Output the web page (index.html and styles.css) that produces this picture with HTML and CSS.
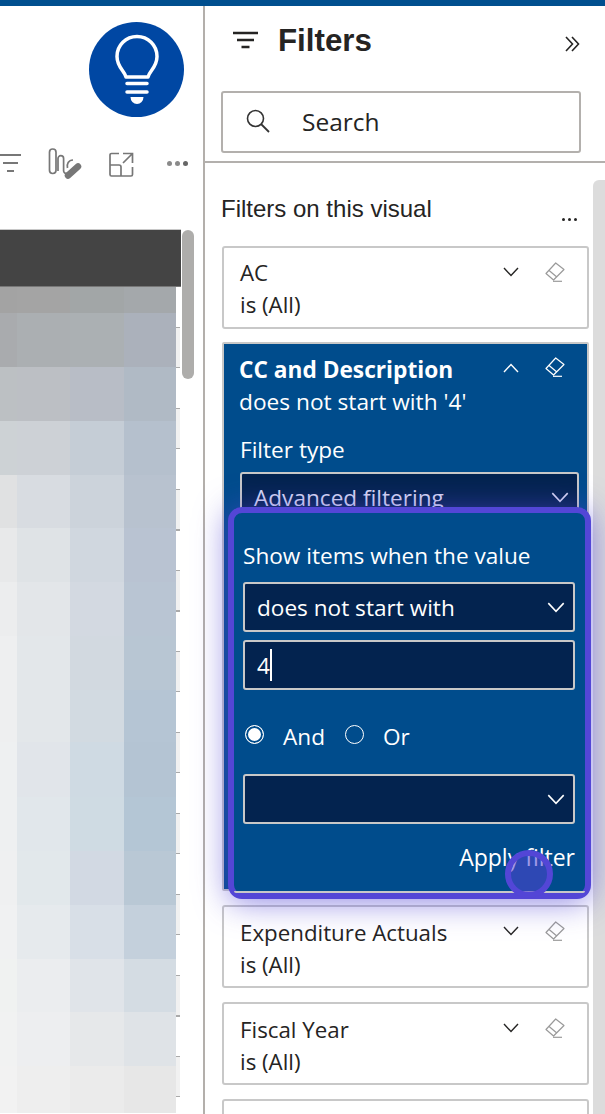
FILE: index.html
```html
<!DOCTYPE html>
<html lang="en">
<head>
<meta charset="utf-8">
<title>Filters</title>
<link rel="stylesheet" href="styles.css">
</head>
<body>
<svg class="defs" width="0" height="0" aria-hidden="true">
  <symbol id="chev" viewBox="0 0 16 10"><path d="M1 1l7 7.500L15 1" fill="none" stroke="currentColor" stroke-width="1.400"/></symbol>
  <symbol id="erase" viewBox="0 0 20 20"><path d="M10.700 1L19 7.500 8.500 18 1 11.500zM3.500 8l8 6.800" fill="none" stroke="currentColor" stroke-width="1.200" stroke-linejoin="round"/><path d="M8 19.300h9" stroke="currentColor" stroke-width="1.200"/></symbol>
</svg>
<div class="topbar"></div>
<div class="app">
  <section class="report">
    <div class="badge-row">
      <div class="badge">
        <svg width="52" height="72" viewBox="0 0 52 72"><path d="M15 43c-1.500-6-9-10-9-20.500a20 20 0 0 1 40 0c0 10.500-7.500 14.500-9 20.500z" fill="none" stroke="#fff" stroke-width="3.500" stroke-linejoin="round"/><path d="M16 49.500h20M16 58h20" stroke="#fff" stroke-width="3.500" stroke-linecap="round"/><path d="M19.500 63h13a6.500 7 0 0 1-13 0z" fill="#fff"/></svg>
      </div>
    </div>
    <div class="visual-tools">
      <svg class="tool-filter" width="21" height="19" viewBox="0 0 21 19"><path d="M0 1h21M3 9h15M7 17h7" stroke="#777" stroke-width="2"/></svg>
      <svg class="tool" width="34" height="32" viewBox="0 0 34 32"><rect x="1.500" y="2" width="6.500" height="24.500" rx="3.200" fill="none" stroke="#777" stroke-width="1.700"/><path d="M10 24V11.500a2.800 2.800 0 0 1 5.600 0V24a2.800 2.800 0 0 0 3.400 2.400" fill="none" stroke="#777" stroke-width="1.700"/><path d="M19.500 21c-1-4 1-8 5.500-8" fill="none" stroke="#777" stroke-width="1.700"/><path d="M20 28.500l10-9" stroke="#777" stroke-width="6.500" stroke-linecap="round"/></svg>
      <svg class="tool tool-expand" width="25" height="25" viewBox="0 0 25 25"><path d="M10 1.500H2.500a1.500 1.500 0 0 0-1.500 1.500v19.500a1.500 1.500 0 0 0 1.500 1.500H22a1.500 1.500 0 0 0 1.500-1.500V15M1 13h9a2 2 0 0 1 2 2v9M14 1.500h9.500V11M23.500 1.500L14 11" fill="none" stroke="#777" stroke-width="1.700"/></svg>
      <div class="tool-dots"><i></i><i></i><i></i></div>
    </div>
    <div class="visual">
      <div class="table">
        <div class="table-head"></div>
        <div class="table-body">
          <div class="heat">
            <div class="heat-row h26"><i style="background:#a3a3a3"></i><i style="background:#a4a4a4"></i><i style="background:#a2a6a7"></i><i style="background:#a4a8ab"></i></div>
            <div class="heat-row"><i style="background:#a9abae"></i><i style="background:#abafb2"></i><i style="background:#abb0b3"></i><i style="background:#abb1bb"></i></div>
            <div class="heat-row"><i style="background:#bcc0c3"></i><i style="background:#bcbfc4"></i><i style="background:#b8bdc6"></i><i style="background:#b0bac5"></i></div>
            <div class="heat-row"><i style="background:#cdd2d5"></i><i style="background:#cdd1d6"></i><i style="background:#c5cdd6"></i><i style="background:#b5c0cd"></i></div>
            <div class="heat-row h53"><i style="background:#e0e1e2"></i><i style="background:#d8dce1"></i><i style="background:#ccd3db"></i><i style="background:#b8c2cf"></i></div>
            <div class="heat-row"><i style="background:#e8e9ea"></i><i style="background:#dfe3e6"></i><i style="background:#d0d7df"></i><i style="background:#b9c3d2"></i></div>
            <div class="heat-row"><i style="background:#ecedee"></i><i style="background:#e3e6e9"></i><i style="background:#d3d9e1"></i><i style="background:#b9c5d3"></i></div>
            <div class="heat-row"><i style="background:#eeeff0"></i><i style="background:#e3e7ea"></i><i style="background:#d2d9e0"></i><i style="background:#b8c6d3"></i></div>
            <div class="heat-row h52"><i style="background:#eeeff0"></i><i style="background:#e3e7ea"></i><i style="background:#d2dae1"></i><i style="background:#b5c5d4"></i></div>
            <div class="heat-row h55"><i style="background:#eef0f1"></i><i style="background:#e1e5ea"></i><i style="background:#cfdae3"></i><i style="background:#b4c4d3"></i></div>
            <div class="heat-row"><i style="background:#eef0f1"></i><i style="background:#e1e7eb"></i><i style="background:#cfdbe3"></i><i style="background:#b4c6d5"></i></div>
            <div class="heat-row"><i style="background:#eff0f1"></i><i style="background:#e2e8eb"></i><i style="background:#d2d9e3"></i><i style="background:#b9c8d5"></i></div>
            <div class="heat-row"><i style="background:#f0f1f2"></i><i style="background:#e6eaed"></i><i style="background:#d8dfe7"></i><i style="background:#c4d0dc"></i></div>
            <div class="heat-row h53"><i style="background:#f0f2f1"></i><i style="background:#ebedef"></i><i style="background:#e0e4e9"></i><i style="background:#d4dce3"></i></div>
            <div class="heat-row"><i style="background:#f1f2f2"></i><i style="background:#edeef0"></i><i style="background:#e6e8ea"></i><i style="background:#dfe3e7"></i></div>
            <div class="heat-row h47"><i style="background:#f2f2f2"></i><i style="background:#eeeeee"></i><i style="background:#ebebeb"></i><i style="background:#e7e7e7"></i></div>
          </div>
          <div class="ticks"></div>
        </div>
      </div>
      <div class="report-scroll"></div>
    </div>
  </section>

  <aside class="pane">
    <header class="pane-head">
      <svg class="pane-icon" width="26" height="18" viewBox="0 0 26 18"><path d="M0 2h25M4 9h17M8.500 16h8" stroke="#252423" stroke-width="2.400"/></svg>
      <h1 class="pane-title">Filters</h1>
      <svg class="pane-collapse" width="15" height="16" viewBox="0 0 15 16"><path d="M1 1l6.500 7L1 15M7 1l6.500 7L7 15" fill="none" stroke="#252423" stroke-width="1.600"/></svg>
    </header>
    <div class="search">
      <svg width="24" height="24" viewBox="0 0 24 24"><circle cx="9.500" cy="9.500" r="8" fill="none" stroke="#333" stroke-width="1.600"/><path d="M15 15l8 8" stroke="#333" stroke-width="1.800"/></svg>
      <span>Search</span>
    </div>
    <div class="pane-rule"></div>
    <div class="pane-body">
      <div class="filters">
        <div class="section-head">
          <span>Filters on this visual</span>
          <span class="section-dots"><i></i><i></i><i></i></span>
        </div>
        <div class="card">
          <div class="card-text"><div>AC</div><div>is (All)</div></div>
          <svg class="chev" width="16" height="10"><use href="#chev"/></svg>
          <svg class="erase" width="20" height="20"><use href="#erase"/></svg>
        </div>
        <div class="card-open">
          <div class="open-head">
            <div class="card-text"><div class="bold">CC and Description</div><div>does not start with '4'</div></div>
            <svg class="chev up" width="16" height="10"><use href="#chev"/></svg>
            <svg class="erase" width="20" height="20"><use href="#erase"/></svg>
          </div>
          <div class="label">Filter type</div>
          <div class="select select-type"><span>Advanced filtering</span><svg width="18" height="11"><use href="#chev"/></svg></div>
          <div class="focus">
            <div class="label">Show items when the value</div>
            <div class="select"><span>does not start with</span><svg width="18" height="11"><use href="#chev"/></svg></div>
            <div class="select input"><span>4</span><b class="caret"></b></div>
            <div class="radios">
              <span class="radio on"></span><span class="radio-text">And</span>
              <span class="radio"></span><span class="radio-text">Or</span>
            </div>
            <div class="select"><span></span><svg width="18" height="11"><use href="#chev"/></svg></div>
            <div class="apply">Apply filter</div>
            <div class="pointer"></div>
          </div>
        </div>
        <div class="card">
          <div class="card-text"><div>Expenditure Actuals</div><div>is (All)</div></div>
          <svg class="chev" width="16" height="10"><use href="#chev"/></svg>
          <svg class="erase" width="20" height="20"><use href="#erase"/></svg>
        </div>
        <div class="card">
          <div class="card-text"><div>Fiscal Year</div><div>is (All)</div></div>
          <svg class="chev" width="16" height="10"><use href="#chev"/></svg>
          <svg class="erase" width="20" height="20"><use href="#erase"/></svg>
        </div>
        <div class="card"></div>
      </div>
      <div class="pane-scroll"></div>
    </div>
  </aside>
</div>
</body>
</html>
```
FILE: styles.css
```css
* { box-sizing: border-box; }
html, body { margin: 0; height: 100%; overflow: hidden; background: #fff; }
body { font-family: "Open Sans", "Noto Sans", sans-serif; color: #252423; }
.defs { position: absolute; }
.topbar { height: 6px; background: #004f8f; }
.app { display: flex; height: 1108px; overflow: hidden; }

/* Report side */
.report { width: 205px; flex: none; border-right: 2px solid #b3afab; }
.badge-row { display: flex; justify-content: flex-end; padding: 16px 19px 0 0; }
.badge { width: 95px; height: 95px; border-radius: 50%; background: #0047a3; display: flex; align-items: center; justify-content: center; }
.badge svg { margin-top: 1px; }
.visual-tools { display: flex; align-items: center; height: 32px; margin-top: 30px; }
.tool { margin-left: 27px; }
.tool-expand { margin-left: 27px; margin-top: 2px; }
.tool-dots { display: flex; gap: 3px; margin-left: 33px; }
.tool-dots i { width: 5px; height: 5px; border-radius: 50%; background: #8a8a8a; }
.tool-dots i:last-child { background: #666; }
.visual { display: flex; margin-top: 50px; gap: 1px; }
.table { width: 181px; flex: none; }
.table-head { height: 58px; background: #444; border-top: 1px solid #c8c8c8; border-bottom: 1px solid #777; }
.table-body { display: flex; width: 180px; }
.heat { width: 176px; flex: none; }
.heat-row { display: grid; grid-template-columns: 17px 53px 54px 52px; height: 54px; }
.heat-row i { display: block; }
.h26 { height: 26px; }
.h47 { height: 47px; }
.h52 { height: 52px; }
.h53 { height: 53px; }
.h55 { height: 55px; }
.ticks { flex: 1; margin-top: 40px; height: 800px; background: repeating-linear-gradient(#aaa 0 1px, #f1f1f1 1px 40.500px, #aaa 40.500px 41.500px, #fff 41.500px 81px); }
.report-scroll { width: 12px; height: 149px; margin-top: 1px; border-radius: 6px; background: #aeadab; }

/* Pane */
.pane { flex: 1; min-width: 0; display: flex; flex-direction: column; }
.pane-head { display: flex; align-items: center; height: 68px; padding: 0 25px 0 28px; }
.pane-title { margin: 2px 0 0 19px; flex: 1; font: 700 31.300px/40px "Liberation Sans", sans-serif; color: #252423; }
.pane-collapse { margin-top: 7px; }
.search { display: flex; align-items: center; height: 62px; margin: 17px 24px 0 16px; padding-left: 23px; gap: 32px; border: 2px solid #b3b0ad; border-radius: 3px; font-size: 24.500px; }
.search svg { margin-top: -3px; }
.search span { margin-top: -2px; }
.pane-rule { height: 2px; margin-top: 8px; background: #b3b0ad; }
.pane-body { flex: 1; display: flex; min-height: 0; }
.filters { flex: 1; min-width: 0; padding: 0 4px 0 16px; }
.pane-scroll { width: 12px; margin-top: 17px; background: #dcdcdc; border-radius: 6px 0 0 0; }
.section-head { display: flex; align-items: center; justify-content: space-between; height: 83px; padding: 0 12px 0 0; font: 24px/30px "Liberation Sans", sans-serif; }
.section-head > span:first-child { margin-top: 9px; }
.section-dots { display: flex; gap: 3px; margin-top: 29px; }
.section-dots i { width: 3px; height: 3px; background: #252423; border-radius: 50%; }

.card { position: relative; height: 83px; margin: 0 0 14px 1px; padding: 9px 72px 0 16px; border: 2px solid #c8c8c8; border-radius: 3px; background: #fff; }
.card-open ~ .card { padding-top: 10px; }
.card-text { font-size: 22.300px; line-height: 32px; }
.card .chev, .open-head .chev { position: absolute; right: 68px; top: 19px; }
.card .erase, .open-head .erase { position: absolute; right: 22px; top: 14px; color: #9a9a9a; }
.card .chev { color: #252423; }

.card-open { width: 367px; height: 549px; margin: -1px 0 14px 1px; border: 2px solid #c8c8c8; background: #004c8c; color: #fff; border-radius: 2px; position: relative; }
.open-head { position: relative; padding: 10px 72px 0 15px; height: 78px; }
.open-head .card-text { font-size: 22.700px; }
.open-head .erase { color: #fff; top: 13px; right: 22px; }
.open-head .chev { top: 19px; }
.chev.up { transform: rotate(180deg); color: #fff; }
.bold { font-weight: 700; }
.label { font-size: 22.600px; line-height: 32px; }
.card-open > .label { margin: 12px 0 0 16px; }
.select { display: flex; align-items: center; justify-content: space-between; height: 50px; padding: 0 8px 0 12px; background: #03234f; border: 2px solid #c8c8c8; border-radius: 3px; font-size: 22.600px; }
.select-type { width: 339px; margin: 6px 0 0 16px; color: #dcdcf5; }
.focus { position: relative; z-index: 2; width: 363px; height: 392px; margin: -15px 0 0 4px; padding: 27px 10px 0 9px; background: #004c8c; border: 6px solid #5346d6; border-radius: 14px; box-shadow: 0 3px 32px rgba(83, 70, 214, .65); }
.focus::after { content: ""; position: absolute; left: 0; right: 0; bottom: 0; height: 2px; background: #c8c8c8; border-radius: 0 0 8px 8px; }
.focus .label { margin-bottom: 10px; }
.focus .select + .select { margin-top: 8px; }
.input { justify-content: flex-start; }
.caret { width: 2px; height: 32px; background: #fff; }
.radios { display: flex; align-items: center; height: 84px; padding-top: 4px; }
.radio { width: 19px; height: 19px; border: 1.500px solid #fff; border-radius: 50%; margin-left: 2px; }
.radio.on { background: #fff; box-shadow: inset 0 0 0 2px #004c8c; }
.radio-text { font-size: 22.600px; margin: 4px 20px 0 19px; }
.radio-text + .radio { margin-left: 0; }
.apply { margin-top: 17px; text-align: right; font-size: 23px; line-height: 32px; }
.pointer { position: absolute; left: 271px; top: 337px; width: 48px; height: 48px; border: 6px solid #5346d6; border-radius: 50%; background: rgba(83, 70, 214, .55); z-index: 3; }
```
